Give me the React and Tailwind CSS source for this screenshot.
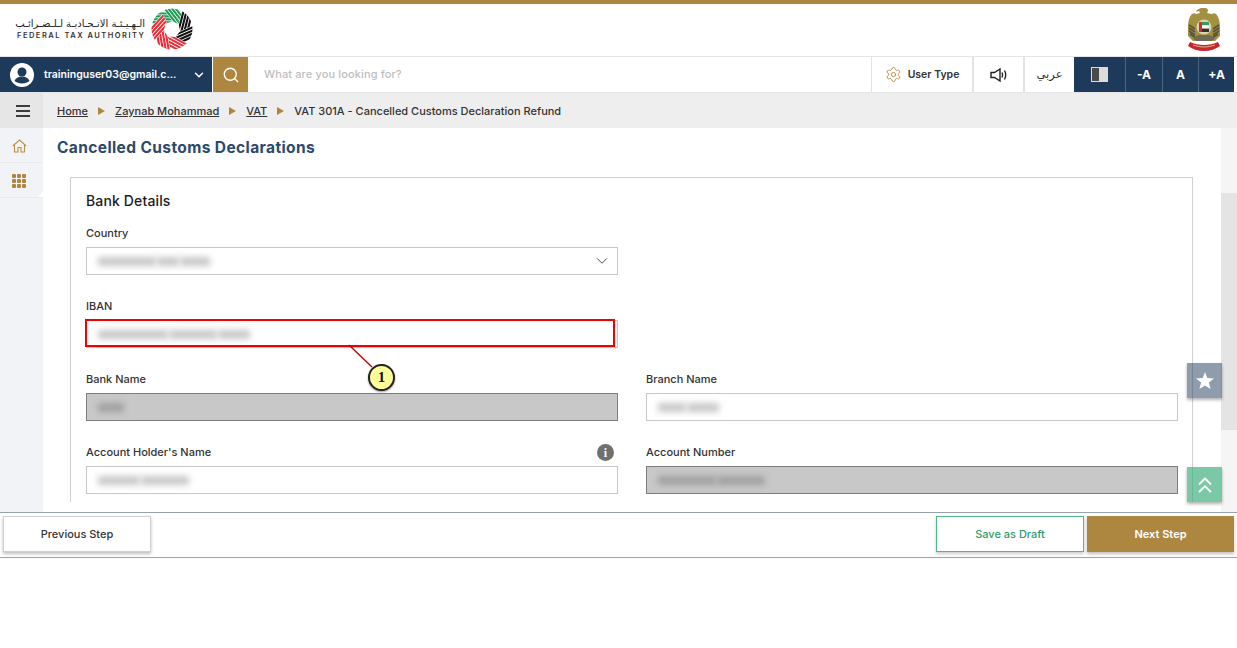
import { Search, ChevronDown, Settings, ChevronsUp } from "lucide-react";

const font = "font-['Inter','Liberation_Sans',sans-serif]";

function FtaLogo() {
  const blades = [
    { r: -40, c: "#1f9d55" },
    { r: 12, c: "#1f9d55" },
    { r: 64, c: "#111111" },
    { r: 116, c: "#111111" },
    { r: 168, c: "#e8303a" },
    { r: 220, c: "#e8303a" },
    { r: 272, c: "#e8303a" },
  ];
  const stripes = "M-15 -22L5 -5M-11.500 -23L8 -6.500M-8 -24L11 -8M-4.500 -25L14 -9.500";
  return (
    <svg width="42" height="42" viewBox="-22 -22 44 44">
      <defs>
        <clipPath id="ring"><circle r="21.5" /></clipPath>
      </defs>
      <g clipPath="url(#ring)">
        {blades.map((b, i) => (
          <g key={i} transform={`rotate(${b.r})`}>
            <path d={stripes} stroke="#fff" strokeWidth="3.3" fill="none" />
            <path d={stripes} stroke={b.c} strokeWidth="2.2" fill="none" />
          </g>
        ))}
      </g>
      <polygon points="0,-8.500 7,-5 8.500,2 4,8 -4,8 -8.500,2 -7,-5" fill="#fff" />
    </svg>
  );
}

function Emblem() {
  return (
    <svg width="34" height="43" viewBox="0 0 34 43">
      {/* wings and body */}
      <path d="M18 0c2 0 3 1 3 3l-1 2 5 1c1-1 3-1 4 0 3 3 4 8 4 14v8l-5 5H6l-5-5v-8c0-6 1-11 4-14 1-1 3-1 4 0l4-1-1-2-3 1c1-3 4-4 6-4z" fill="#a3913f" />
      {/* feathers */}
      <path d="M2 17l6 4M2 20l6 4M2 23l6 4M3 26l6 4M32 17l-6 4M32 20l-6 4M32 23l-6 4M31 26l-6 4" stroke="#55523f" strokeWidth="1.6" />
      <path d="M10 33l-4-2 5-4h12l5 4-4 2z" fill="#6e6b57" />
      {/* shield */}
      <circle cx="17" cy="19" r="7.500" fill="#d8d2b8" />
      <rect x="12" y="14" width="3" height="10" fill="#d22b2b" />
      <rect x="15" y="14" width="7" height="3.300" fill="#3b9a5a" />
      <rect x="15" y="17.300" width="7" height="3.300" fill="#fff" />
      <rect x="15" y="20.600" width="7" height="3.400" fill="#333" />
      {/* ribbon */}
      <path d="M3 34c4 2 9 3 14 3s10-1 14-3l2 4c-4 3-10 5-16 5S5 41 1 38z" fill="#c9252f" />
      <path d="M6 37c3 1 7 2 11 2s8-1 11-2" stroke="#eeb" strokeWidth="0.7" fill="none" />
    </svg>
  );
}

function Blur({ segments, dark }) {
  return (
    <div className="flex items-center h-full pl-[11px] gap-[1px]">
      {segments.map((w, i) => (
        <div key={i} style={{ width: w }} className={`h-[9px] blur-[3px] ${dark ? "bg-[#a0a0a0]" : "bg-[#c8c8c8]"}`} />
      ))}
    </div>
  );
}

function Field({ label, segments, dark, info, select }) {
  return (
    <div>
      <div className="flex items-center justify-between h-[17px] mb-[5px]">
        <label className="text-[11px] font-medium text-[#333]">{label}</label>
        {info && <span className="flex items-center justify-center w-[17px] h-[17px] mr-[4px] rounded-full bg-[#707070] text-white text-[12px] font-bold font-['Liberation_Serif',serif]">i</span>}
      </div>
      <div className={`relative h-[28px] border ${dark ? "bg-[#c8c8c8] border-[#7c7c7c]" : "bg-white border-[#c8c8c8]"}`}>
        <Blur segments={segments} dark={dark} />
        {select && <ChevronDown className="absolute right-[6px] top-[4px] text-[#444]" size={18} strokeWidth={1.25} />}
      </div>
    </div>
  );
}

export default function App() {
  return (
    <div className={`relative w-[1237px] h-[648px] overflow-hidden bg-white ${font}`}>
      {/* logo row */}
      <header className="flex items-center justify-between h-[56px] border-t-4 border-[#ad873f] pl-[17px] pr-[16px] pb-[2px]">
        <div className="flex items-center gap-[6px]">
          <div className="w-[128px]">
            <div dir="rtl" className="text-[10px] leading-[13px] text-[#222] font-['DejaVu_Sans',sans-serif] whitespace-nowrap text-right">الـهـيـئـة الاتـحـاديـة لـلـضـرائـب</div>
            <div className="text-[7.5px] leading-[11px] font-semibold tracking-[0.2em] text-[#333] whitespace-nowrap">FEDERAL TAX AUTHORITY</div>
          </div>
          <FtaLogo />
        </div>
        <Emblem />
      </header>

      {/* toolbar */}
      <div className="flex h-[37px] border-y border-[#e5e5e5]">
        <div className="flex items-center w-[212px] bg-[#1e3a5a] pl-[10px] pr-[6px] text-white">
          <svg width="24" height="24" viewBox="0 0 24 24">
            <circle cx="12" cy="12" r="12" fill="#fff" />
            <circle cx="12" cy="9" r="4.500" fill="#1e3a5a" />
            <path d="M4.500 18c1-3 4-4.500 7.500-4.500s6.500 1.500 7.500 4.500c-2 1.500-4.500 2.500-7.500 2.500s-5.500-1-7.500-2.500z" fill="#1e3a5a" />
          </svg>
          <span className="ml-[10px] text-[10.5px] font-semibold">traininguser03@gmail.c...</span>
          <ChevronDown className="ml-auto" size={14} strokeWidth={2.5} />
        </div>
        <div className="flex items-center justify-center w-[35px] ml-[1px] bg-[#ad873f]">
          <Search className="text-white" size={18} strokeWidth={1.75} />
        </div>
        <div className="flex items-center flex-1 pl-[16px] text-[11px] font-medium tracking-[0.012em] text-[#bdbdbd]">What are you looking for?</div>
        <div className="flex items-center justify-center gap-[6px] w-[101px] border-l border-[#e3e3e3] text-[10.5px] font-semibold text-[#333]">
          <Settings className="text-[#ad873f]" size={17} strokeWidth={1.25} />
          User Type
        </div>
        <div className="flex items-center justify-center w-[51px] border-l-2 border-[#e3e3e3]">
          <svg width="18" height="16" viewBox="0 0 18 16" fill="none" stroke="#222" strokeWidth="1.4">
            <path d="M1 5.500h3.500L10 2v12L4.500 10.500H1z" />
            <path d="M12 5.500c.8 1.500.8 3.500 0 5M14.500 3.500c1.500 2.800 1.500 6.200 0 9" />
          </svg>
        </div>
        <div dir="rtl" className="flex items-center justify-center w-[51px] border-l-2 border-[#e3e3e3] text-[11.5px] text-[#333] font-['DejaVu_Sans',sans-serif]">عربي</div>
        <div className="flex items-center justify-center w-[51px] bg-[#1e3a5a]">
          <div className="flex w-[17px] h-[15px] bg-[#dcdcdc] border border-[#dcdcdc]">
            <div className="w-[7px] bg-[#4a4a4a]" />
          </div>
        </div>
        <div className="flex items-center justify-center w-[37px] border-l border-[#4b6480] bg-[#1e3a5a] text-white text-[12px] font-bold">-A</div>
        <div className="flex items-center justify-center w-[36px] border-l border-[#4b6480] bg-[#1e3a5a] text-white text-[12px] font-bold">A</div>
        <div className="flex items-center justify-center w-[36px] border-l border-[#4b6480] bg-[#1e3a5a] text-white text-[12px] font-bold">+A</div>
        <div className="w-[3px]" />
      </div>

      {/* breadcrumb */}
      <div className="flex h-[35px] bg-[#eeeeee]">
        <div className="flex items-center justify-center w-[43px] pl-[3px] bg-[#e6e6e6]">
          <div className="flex flex-col gap-[3px] w-[14px]">
            <div className="h-[2px] bg-[#3c3c3c]" />
            <div className="h-[2px] bg-[#3c3c3c]" />
            <div className="h-[2px] bg-[#3c3c3c]" />
          </div>
        </div>
        <nav className="flex items-center pl-[14px] pt-[1px] text-[11px] font-medium text-[#333]">
          <a className="underline">Home</a>
          <span className="mx-[10px] w-0 h-0 border-y-[4px] border-y-transparent border-l-[7px] border-l-[#ad873f]" />
          <a className="underline">Zaynab Mohammad</a>
          <span className="mx-[10px] w-0 h-0 border-y-[4px] border-y-transparent border-l-[7px] border-l-[#ad873f]" />
          <a className="underline">VAT</a>
          <span className="mx-[10px] w-0 h-0 border-y-[4px] border-y-transparent border-l-[7px] border-l-[#ad873f]" />
          <span>VAT 301A - Cancelled Customs Declaration Refund</span>
        </nav>
      </div>

      {/* body */}
      <div className="flex h-[384px]">
        <aside className="w-[43px] bg-[#f1f3f6]">
          <div className="flex items-center justify-center h-[35px] pt-[2px] pr-[5px] border-b border-[#e8eaed]">
            <svg width="15" height="14" viewBox="0 0 15 14" fill="none" stroke="#b8904c" strokeWidth="1.1">
              <path d="M0.800 7L7.500 1l6.700 6M2.500 6v7h3.500V8.500h3V13h3.500V6" />
            </svg>
          </div>
          <div className="relative flex items-center justify-center h-[35px] pt-[1px] pr-[5px] border-b border-[#e8eaed]">
            <div className="grid grid-cols-3 gap-[1px] w-[14px]">
              {Array.from({ length: 9 }).map((_, i) => (
                <div key={i} className="h-[4px] bg-[#ad873f] rounded-[1px]" />
              ))}
            </div>
            <span className="absolute right-0 bottom-0 w-0 h-0 border-b-[5px] border-b-white border-l-[5px] border-l-transparent" />
          </div>
        </aside>

        <main className="flex-1 bg-white pl-[14px] pr-[28px]">
          <h1 className="h-[49px] pt-[10px] text-[15.5px] leading-[20px] font-bold tracking-[0.025em] text-[#2b4a6b]">Cancelled Customs Declarations</h1>
          <div className="ml-[13px] h-[325px] border-x border-t border-[#d0d0d0] pl-[15px] pr-[14px]">
            <h2 className="h-[47px] pt-[14px] text-[14px] leading-[17px] font-medium tracking-[0.01em] text-[#1c1c1c]">Bank Details</h2>
            <div className="grid grid-cols-2 gap-x-[28px] gap-y-[23px]">
              <Field label="Country" segments={[58, 22, 30]} select />
              <div />
              <Field label="IBAN" segments={[70, 48, 32]} />
              <div />
              <Field label="Bank Name" segments={[26]} dark />
              <Field label="Branch Name" segments={[28, 32]} />
              <Field label="Account Holder's Name" segments={[42, 48]} info />
              <Field label="Account Number" segments={[58, 48]} dark />
            </div>
          </div>
        </main>

        <div className="w-[16px] bg-[#f5f5f5] pt-[65px]">
          <div className="h-[237px] bg-[#e4e4e4]" />
        </div>
      </div>

      {/* footer */}
      <footer className="flex items-center h-[46px] pb-[2px] border-y border-[#98a2ad] bg-white px-[3px] text-[11px] font-medium">
        <button className="w-[148px] h-[36px] bg-white border border-[#cfcfcf] shadow-[0_2px_3px_rgba(0,0,0,0.25)] text-[#333]">Previous Step</button>
        <button className="ml-auto w-[148px] h-[36px] bg-white border border-[#4fb98a] shadow-[0_2px_3px_rgba(0,0,0,0.2)] text-[#2f9a69]">Save as Draft</button>
        <button className="ml-[3px] w-[147px] h-[36px] bg-[#ad873f] shadow-[0_2px_3px_rgba(0,0,0,0.25)] font-semibold text-white">Next Step</button>
      </footer>

      {/* floating buttons */}
      <button className="absolute left-[1187px] top-[363px] flex items-center justify-center w-[35px] h-[35px] bg-[#1e3a5a]/50 shadow-[0_2px_3px_rgba(0,0,0,0.3)]">
        <svg width="18" height="17" viewBox="0 0 18 17" fill="#fff">
          <polygon points="9,0 11.300,6 18,6.400 12.800,10.600 14.600,17 9,13.400 3.400,17 5.200,10.600 0,6.400 6.700,6" />
        </svg>
      </button>
      <button className="absolute left-[1187px] top-[467px] flex items-center justify-center w-[35px] h-[35px] bg-[#33aa75]/65 shadow-[0_2px_3px_rgba(0,0,0,0.3)] text-white">
        <ChevronsUp size={26} strokeWidth={1.75} />
      </button>

      {/* annotation */}
      <div className="absolute left-[85px] top-[319px] w-[530px] h-[28px] border-2 border-[#f00000]" />
      <svg className="absolute left-[345px] top-[343px]" width="32" height="28">
        <line x1="4" y1="2" x2="27" y2="24" stroke="#c80000" strokeWidth="1.4" />
      </svg>
      <div className="absolute left-[368px] top-[364px] flex items-center justify-center w-[27px] h-[27px] rounded-full border-2 border-[#222] bg-[#ffff99] shadow-[0_1px_2px_rgba(0,0,0,0.4)] text-[15px] font-bold text-[#111] font-['Liberation_Serif',serif]">1</div>
    </div>
  );
}
